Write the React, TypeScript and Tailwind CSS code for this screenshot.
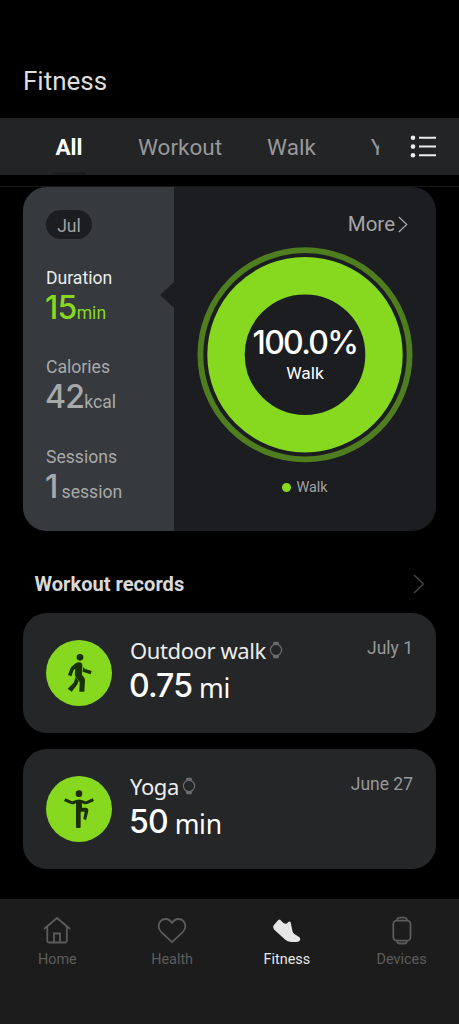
import type { ReactNode } from "react";

const records = [
  { title: "Outdoor walk", value: "0.75", unit: "mi", date: "July 1", icon: <WalkIcon /> },
  { title: "Yoga", value: "50", unit: "min", date: "June 27", icon: <YogaIcon /> },
];

function WalkIcon() {
  return (
    <svg viewBox="0 0 198 198" className="size-full" fill="#1b3006">
      <circle cx="102" cy="52" r="10" />
      <path d="M90 69q4-2 9-2 9 0 10 8l-1 29q9 9 9 17l-2 34h-15l1-29-12-16q-4-5-2-12l1-12-5 4-7 19-10-4 7-19q2-5 6-8z" />
      <path d="M112 80q2 6 6 7l19 6-3 10-24-8z" />
      <path d="M89 111l9 12-5 12-16 20-12-9 18-18z" />
    </svg>
  );
}

function YogaIcon() {
  return (
    <svg viewBox="0 0 198 198" className="size-full" fill="none" stroke="#1b3006" strokeWidth="9">
      <circle cx="99" cy="53" r="10" fill="#1b3006" stroke="none" />
      <path d="M56 71q10 5 20 9 4 1 8-1 7-4 15-4t15 4q4 2 8 1 10-4 20-9" />
      <path d="M90 74h18v21h10q10 0 9 10l-7 28-8-4 4-22h-12v46q0 3-3 3h-8q-3 0-3-3z" fill="#1b3006" stroke="none" />
    </svg>
  );
}

function WatchIcon() {
  return (
    <svg viewBox="0 0 14 18" className="h-[18px] w-3.5" fill="none" stroke="#6b6c6e">
      <circle cx="7" cy="9" r="5.600" strokeWidth="1.200" />
      <path d="M4.500.8h5l.8 3.200q-3.300-1.600-6.600 0zM4.500 17.200h5l.8-3.200q-3.300 1.600-6.600 0z" fill="#6b6c6e" stroke="none" />
    </svg>
  );
}

function Chevron({ className }: { className: string }) {
  return (
    <svg viewBox="0 0 12 20" className={className} fill="none" stroke="currentColor" strokeWidth="1.500">
      <path d="M1 1l9.500 9L1 19" />
    </svg>
  );
}

function Stat({ label, value, unit, active, gap }: { label: string; value: string; unit: string; active?: boolean; gap?: boolean }) {
  return (
    <div className={active ? "text-[#86d91f]" : "text-[#a8a9ab]"}>
      <p className={active ? "text-[17.6px] leading-6 text-[#ececec]" : "text-[17.6px] leading-6"}>{label}</p>
      <p className="flex h-[36px] items-baseline leading-[36px]">
        <span className="-ml-px font-['Inter',sans-serif] text-[32px] font-medium tracking-[-0.7px]">{value}</span>
        <span className={gap ? "ml-1 text-[17.6px]" : "text-[17.6px]"}>{unit}</span>
      </p>
    </div>
  );
}

function NavItem({ label, active, children }: { label: string; active?: boolean; children: ReactNode }) {
  return (
    <div className={active ? "flex flex-1 flex-col items-center text-[#e6e6e6]" : "flex flex-1 flex-col items-center text-[#5c5c5c]"}>
      <svg viewBox="0 0 30 30" className="size-[30px]" fill="none" stroke="currentColor" strokeWidth="1.800">
        {children}
      </svg>
      <span className="mt-1 text-[14.4px] leading-5">{label}</span>
    </div>
  );
}

export default function App() {
  return (
    <div className="flex h-[1024px] w-[459px] flex-col overflow-hidden bg-black font-['Roboto',sans-serif]">
      <header className="h-[118px] shrink-0 pt-[65px] pl-[23px]">
        <h1 className="text-[26px] leading-8 text-[#dedede]">Fitness</h1>
      </header>

      {/* Category tabs */}
      <div className="flex h-[57px] shrink-0 items-center bg-[#232425] text-[22.5px] text-[#97989a]">
        <div className="flex h-full w-[379px] overflow-hidden leading-[59px] whitespace-nowrap">
          <div className="ml-[52px] flex h-full w-[34px] shrink-0 flex-col items-center">
            <span className="h-[54px] font-bold text-white">All</span>
            <span className="h-[3px] w-full shrink-0 bg-[#1c1d1e]" />
          </div>
          <span className="ml-[52px] shrink-0">Workout</span>
          <span className="ml-[45px] shrink-0">Walk</span>
          <span className="ml-[55px] shrink-0">Yoga</span>
        </div>
        <svg viewBox="0 0 28 24" className="ml-[30px] h-6 w-7" fill="none" stroke="#ececec" strokeWidth="2">
          <path d="M10 2.800h17M10 11.600h17M10 20.300h17" />
          <g fill="#ececec" stroke="none">
            <circle cx="4" cy="2.800" r="2.300" />
            <circle cx="4" cy="11.600" r="2.300" />
            <circle cx="4" cy="20.300" r="2.300" />
          </g>
        </svg>
      </div>
      <div className="h-3 shrink-0 border-b border-[#171717]" />

      {/* Monthly summary */}
      <section className="mx-[23px] flex h-[344px] shrink-0 overflow-hidden rounded-[24px] bg-[#1c1d20]">
        <div className="relative w-[151px] bg-[#36393d] pt-[23px] pl-[23px]">
          <span className="flex h-[29px] w-[46px] items-center justify-center rounded-full bg-[#1c1d20] pt-[3px] text-[17.6px] text-[#a0a1a3]">Jul</span>
          <div className="mt-[26.5px] flex flex-col gap-[29.5px]">
            <Stat label="Duration" value="15" unit="min" active />
            <Stat label="Calories" value="42" unit="kcal" />
            <Stat label="Sessions" value="1" unit="session" gap />
          </div>
          <svg viewBox="0 0 14 26" className="absolute top-[95px] right-0 h-[26px] w-3.5" fill="#1c1d20">
            <path d="M14 0v26L0 13z" />
          </svg>
        </div>
        <div className="flex flex-1 flex-col items-center">
          <div className="mt-[25px] mr-7 flex items-center gap-[3px] self-end text-[20.5px] leading-6 text-[#a4a5a7]">
            More
            <Chevron className="h-[17px] w-[10px]" />
          </div>
          <div className="mt-[11px] grid size-[216px] place-items-center">
            <svg viewBox="0 0 216 216" className="col-start-1 row-start-1 size-full" fill="none">
              <circle cx="108" cy="107.700" r="104.600" stroke="#4f7e1f" strokeWidth="5.800" />
              <circle cx="108" cy="107.700" r="79" stroke="#86d91f" strokeWidth="37.400" />
            </svg>
            <div className="col-start-1 row-start-1 flex flex-col items-center text-white">
              <span className="font-['Inter',sans-serif] text-[32px] leading-9 font-medium tracking-[-1.7px]">100.0%</span>
              <span className="text-[17.4px] leading-6">Walk</span>
            </div>
          </div>
          <div className="mt-[14px] flex items-center gap-[5px] text-[14.4px] leading-5 text-[#a0a1a3]">
            <span className="size-[9px] rounded-full bg-[#86d91f]" />
            <span className="pt-px">Walk</span>
          </div>
        </div>
      </section>

      {/* Latest workouts */}
      <div className="mt-[41px] flex h-6 shrink-0 items-center justify-between pr-[34px] pl-[34.5px]">
        <h2 className="text-[20.1px] leading-6 font-bold text-[#d9d9d9]">Workout records</h2>
        <Chevron className="h-5 w-3 text-[#454545]" />
      </div>
      <div className="mx-[23px] mt-[17px] flex shrink-0 flex-col gap-4">
        {records.map((record) => (
          <article key={record.title} className="flex h-[120px] rounded-[24px] bg-[#252628] pt-[25px] pr-[23px] pl-[23px]">
            <div className="mt-0.5 size-[66px] rounded-full bg-[#86d91f]">{record.icon}</div>
            <div className="-mt-px ml-[18px] font-['Noto_Sans',sans-serif] text-white">
              <div className="flex items-center gap-[3px]">
                <h3 className="text-[22px] leading-[26px] tracking-[-0.4px] text-[#ececec]">{record.title}</h3>
                <WatchIcon />
              </div>
              <p className="flex h-[46px] items-start gap-[7px]">
                <span className="-ml-px font-['Inter',sans-serif] text-[32px] leading-[46px] font-medium tracking-[-0.9px]">{record.value}</span>
                <span className="text-[26.5px] leading-[51px] tracking-[-0.3px]">{record.unit}</span>
              </p>
            </div>
            <time className="-mt-px ml-auto text-[17.5px] leading-[22px] text-[#97989a]">{record.date}</time>
          </article>
        ))}
      </div>

      {/* Bottom navigation */}
      <nav className="mt-[30px] flex flex-1 bg-[#1c1c1c] pt-[17px]">
        <NavItem label="Home">
          <path d="M2 13L15 2l13 11M5.300 10.500V25q0 1.500 1.500 1.500h16.500q1.500 0 1.500-1.500V10.500M12 26v-8.500h6V26" />
        </NavItem>
        <NavItem label="Health">
          <path d="M15 26.200L4 15.800C-1 10 3 3 8.500 3q4 0 6.500 4 2.500-4 6.500-4C27 3 31 10 26 15.800z" strokeLinejoin="round" />
        </NavItem>
        <NavItem label="Fitness" active>
          <path d="M1.700 9.300L6.300 4q1.300-1.300 2.400.2l1.600 1.900q2 2.200 4.500 1.400l1.600-1.500q1.600-1.200 2.300.5l1.700 8.300q.4 2.200 2 3.200l4.700 3q1.600 1.200 1 3-.8 1.900-3.600 1.900h-5.500q-3.300 0-6-2.300L2 13.500Q0 11.400 1.700 9.300z" fill="currentColor" stroke="none" />
        </NavItem>
        <NavItem label="Devices">
          <rect x="6.300" y="4.700" width="17.200" height="20" rx="3.500" />
          <path d="M9.700 4.200q1-2.500 2.500-2.500h5.500q1.500 0 2.500 2.500M9.700 25.200q1 2.300 2.500 2.300h5.500q1.500 0 2.500-2.300" />
        </NavItem>
      </nav>
    </div>
  );
}
